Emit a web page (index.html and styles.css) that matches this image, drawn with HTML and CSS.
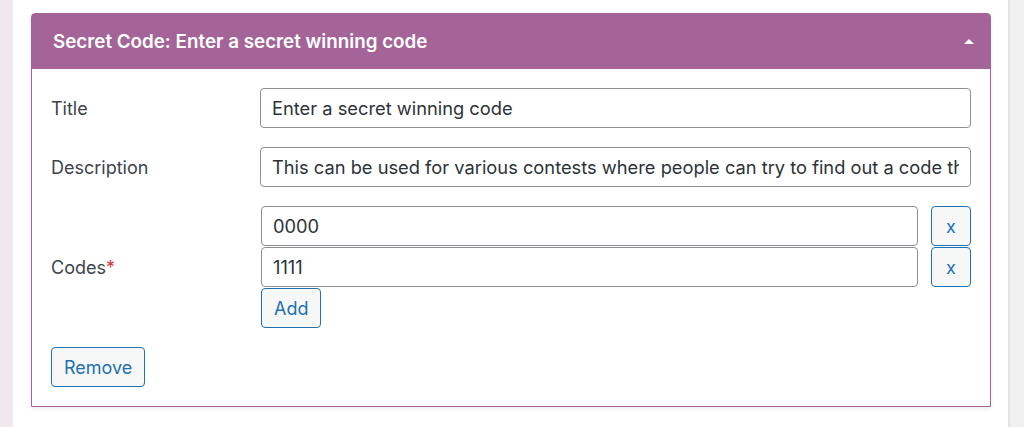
FILE: index.html
```html
<!DOCTYPE html>
<html lang="en">
<head>
    <meta charset="UTF-8">
    <meta name="viewport" content="width=device-width, initial-scale=1.0">
    <title>Secret Code</title>
    <link rel="stylesheet" href="styles.css">
</head>
<body>
    <div class="side-strip"></div>

    <div class="main">
        <!-- Secret code box -->
        <div class="code-box">
            <div class="code-box-header">
                <h3>Secret Code: Enter a secret winning code</h3>
                <span class="toggle-arrow"></span>
            </div>

            <div class="code-box-body">
                <div class="field-row">
                    <label for="title">Title</label>
                    <input type="text" id="title" value="Enter a secret winning code">
                </div>

                <div class="field-row">
                    <label for="description">Description</label>
                    <input type="text" id="description" value="This can be used for various contests where people can try to find out a code that wins them a prize">
                </div>

                <div class="field-row codes-row">
                    <label>Codes<span class="required">*</span></label>
                    <div class="codes-list">
                        <div class="code-item">
                            <input type="text" value="0000">
                            <button class="btn btn-x">x</button>
                        </div>
                        <div class="code-item">
                            <input type="text" value="1111">
                            <button class="btn btn-x">x</button>
                        </div>
                        <div>
                            <button class="btn">Add</button>
                        </div>
                    </div>
                </div>

                <div>
                    <button class="btn">Remove</button>
                </div>
            </div>
        </div>
    </div>

    <div class="side-right"></div>
</body>
</html>
```

FILE: styles.css
```css
body {
    margin: 0;
    display: flex;
    min-height: 427px;
    font-family: Inter, "Liberation Sans", sans-serif;
    font-size: 18px;
    color: #3c434a;
    background-color: #fff;
}
.side-strip {
    width: 13px;
    background-color: #f1e7ef;
}
.side-right {
    width: 14px;
    border-left: 2px solid #e2e3e5;
    background-color: #f0f0f1;
}
.main {
    flex: 1;
    padding: 13px 17px 0 18px;
}
/* Box */
.code-box {
    border: 1px solid #a46497;
    border-radius: 4px 4px 0 0;
    background-color: #fff;
    box-shadow: 0 2px 4px rgba(0, 0, 0, 0.08);
}
.code-box-header {
    display: flex;
    align-items: center;
    justify-content: space-between;
    height: 55px;
    padding: 0 16px 0 21px;
    background-color: #a46497;
    color: #fff;
}
.code-box-header h3 {
    margin: 0;
    font-size: 18.8px;
    font-weight: 600;
}
.toggle-arrow {
    width: 0;
    height: 0;
    border-left: 5px solid transparent;
    border-right: 5px solid transparent;
    border-bottom: 5px solid #fff;
}
.code-box-body {
    display: flex;
    flex-direction: column;
    gap: 19px;
    padding: 19px 19px 19px 19px;
}
.field-row {
    display: grid;
    grid-template-columns: 209px 1fr;
    align-items: center;
}
.field-row label {
    font-size: 18px;
}
.required {
    color: #d63638;
}
input[type="text"] {
    box-sizing: border-box;
    width: 100%;
    height: 40px;
    padding: 0 11px;
    border: 1px solid #8c8f94;
    border-radius: 4px;
    font-family: inherit;
    font-size: 18.3px;
    color: #2c3338;
    background-color: #fff;
}
.codes-list {
    display: flex;
    flex-direction: column;
    gap: 1px;
    padding-left: 1px;
}
.code-item {
    display: flex;
    gap: 13px;
}
.btn {
    box-sizing: border-box;
    height: 40px;
    padding: 0 12px;
    border: 1px solid #2271b1;
    border-radius: 4px;
    background-color: #f6f7f7;
    color: #2271b1;
    font-family: inherit;
    font-size: 18px;
    cursor: pointer;
}
.btn-x {
    flex: none;
    width: 40px;
    padding: 0;
    font-size: 18px;
}
```
